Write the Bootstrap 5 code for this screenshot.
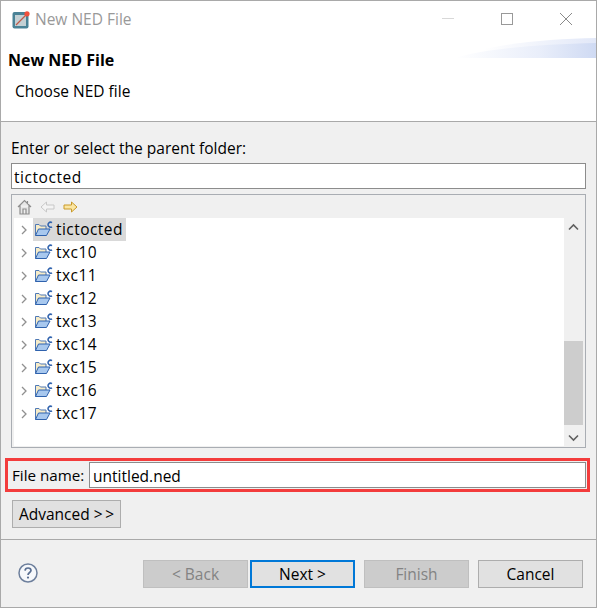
<!DOCTYPE html>
<html lang="en">
<head>
<meta charset="utf-8">
<title>New NED File</title>
<link href="https://cdn.jsdelivr.net/npm/bootstrap@5.3.0/dist/css/bootstrap.min.css" rel="stylesheet">
<style>
html,body{margin:0;height:608px;overflow:hidden;background:#f0f0f0}
body{font-family:"Open Sans","Noto Sans",sans-serif;font-size:15.5px;color:#000;line-height:20px}
.win-frame{width:597px;height:608px;border:1px solid #a9a9a9;background:#f0f0f0}
.title-strip{height:37px;background:#fff;padding-left:11px;color:#999;gap:5px;flex:none}
.title-word{position:relative;top:-1px}
.win-ctl{width:14px;height:14px;display:block}
.ctl-cell{width:59px;height:37px}
.ctl-nudge{margin-right:1px;margin-bottom:2px}
.head-zone{height:84px;background:#fff;border-bottom:1px solid #a9a9a9;position:relative;padding-left:7px;flex:none}
.head-art{position:absolute;right:0;top:0;width:141px;height:21px}
.head-title{font-weight:700;font-size:16px;height:20px;padding-top:12px;box-sizing:content-box}
.head-sub{padding-left:7px;margin-top:11px}
.page-zone{padding:0 10px;flex:none}
.lbl-folder{margin-top:16px;height:20px}
.flat-input{height:26px;border:1px solid #8c8c8c;border-radius:0;padding:1px 2px 0;font-size:15.5px;line-height:20px;color:#000;background:#fff;box-shadow:none}
.folder-input{margin-top:5px;letter-spacing:.55px}
.tree-box{margin-top:5px;height:254px;border:1px solid #a9adb3;padding:1px 2px;background:#f0f0f0}
.tree-tools{height:22px;gap:8px;padding-left:3px}
.tree-main{height:228px}
.tree-list{background:#fff}
.tree-row{height:23px;padding-left:5px}
.tree-arrow{width:10px;height:10px;margin-right:4px;flex:none}
.tree-item{height:23px;padding:0 3px 0 1px;gap:3px;white-space:nowrap}
.tree-word{position:relative;top:-1px;letter-spacing:.45px}
.tree-sel{background:#d9d9d9}
.v-bar{width:19px;background:#f0f0f0}
.v-btn{height:17px;flex:none}
.v-track{flex:1}
.v-gap{height:106px}
.v-thumb{height:84px;background:#cdcdcd}
.red-box{margin:10px -4px 0 -6px;height:34px;border:3px solid #f33c3c;padding:1px 1px 1px 4px;gap:5px}
.name-input{flex:1;min-width:0;padding-left:3px}
.file-lbl{width:72px;white-space:nowrap;font-size:15.2px}
.plain-btn{height:28px;border:1px solid #adadad;border-radius:0;background:#e1e1e1;color:#000;font-size:15.5px;line-height:20px;padding:0;width:105px;font-family:inherit}
.plain-btn:disabled{background:#cccccc;color:#838383;border-color:#bfbfbf;opacity:1}
.adv-btn{width:109px;margin-top:8px;margin-left:1px}
.line-sep{height:1px;background:#a9a9a9;margin-top:11px;flex:none}
.foot-row{padding:20px 13px 0 17px}
.help-ico{width:20px;height:20px;display:block;margin-top:3px}
.next-btn{border:2px solid #0078d7;margin-left:2px}
.finish-btn{margin-left:9px}
.cancel-btn{margin-left:9px}
</style>
</head>
<body>
<div class="win-frame d-flex flex-column">
  <div class="title-strip d-flex align-items-center">
    <svg width="18" height="18" viewBox="0 0 18 18">
      <rect x="0.5" y="1" width="16" height="16.5" rx="2" fill="#4a8296"/>
      <rect x="3" y="4" width="11" height="11" fill="#c3d0d4"/>
      <path d="M4 14 L14 4" stroke="#c05a4a" stroke-width="1.3"/>
      <circle cx="15" cy="2.8" r="2.6" fill="#f0503c"/>
    </svg>
    <span class="title-word">New NED File</span>
    <div class="ms-auto d-flex ctl-nudge">
      <div class="ctl-cell d-flex align-items-center justify-content-center"><svg class="win-ctl" viewBox="0 0 14 14"><path d="M1 6.5H13" stroke="#d8d8d8"/></svg></div>
      <div class="ctl-cell d-flex align-items-center justify-content-center"><svg class="win-ctl" viewBox="0 0 14 14"><rect x="1.5" y="1.5" width="11" height="11" fill="none" stroke="#999"/></svg></div>
      <div class="ctl-cell d-flex align-items-center justify-content-center"><svg class="win-ctl" viewBox="0 0 14 14"><path d="M1 1L13 13M13 1L1 13" stroke="#8a8a8a"/></svg></div>
    </div>
  </div>
  <div class="head-zone">
    <svg class="head-art" viewBox="0 0 141 21">
      <defs><linearGradient id="hg" x1="0" x2="1" y1="0" y2="0"><stop offset="0" stop-color="#fff"/><stop offset="0.6" stop-color="#e9eefa"/><stop offset="1" stop-color="#cfdaf3"/></linearGradient>
      <linearGradient id="hg2" x1="0" x2="1" y1="0" y2="0"><stop offset="0.2" stop-color="#fff"/><stop offset="1" stop-color="#e2e8f8"/></linearGradient></defs>
      <path d="M0 20 C25 8 85 1 141 0 V20Z" fill="url(#hg2)"/>
      <path d="M0 20 C30 11 85 6 141 5 V20Z" fill="url(#hg)"/>
    </svg>
    <div class="head-title">New NED File</div>
    <div class="head-sub">Choose NED file</div>
  </div>
  <div class="page-zone">
    <div class="lbl-folder">Enter or select the parent folder:</div>
    <input class="form-control flat-input folder-input" type="text" value="tictocted">
    <div class="tree-box">
      <div class="tree-tools d-flex align-items-center">
        <svg width="15" height="16" viewBox="0 0 15 16"><path d="M1 8L7.5 1.5L14 8M3 6.5V15H12V6.5M6 15V10H9V15M10.5 2V5" fill="#e6e6e6" stroke="#8d8d8d" stroke-width="1.2"/></svg>
        <svg width="15" height="12" viewBox="0 0 15 12"><path d="M6.5 1L1 6L6.5 11V8H14V4H6.5Z" fill="#f4f4f4" stroke="#c8c8c8"/></svg>
        <svg width="15" height="12" viewBox="0 0 15 12"><path d="M8.5 1L14 6L8.5 11V8H1V4H8.5Z" fill="#fbe6a2" stroke="#c99a2a"/></svg>
      </div>
      <div class="tree-main d-flex">
        <div class="tree-list flex-grow-1">
          <div class="tree-row d-flex align-items-center"><svg class="tree-arrow" viewBox="0 0 10 10"><path d="M3 1L7 5L3 9" fill="none" stroke="#909090" stroke-width="1.3"/></svg><div class="tree-item tree-sel d-flex align-items-center"><svg width="19" height="17" viewBox="0 0 19 17"><use href="#fold"/></svg><span class="tree-word">tictocted</span></div></div>
          <div class="tree-row d-flex align-items-center"><svg class="tree-arrow" viewBox="0 0 10 10"><path d="M3 1L7 5L3 9" fill="none" stroke="#909090" stroke-width="1.3"/></svg><div class="tree-item d-flex align-items-center"><svg width="19" height="17" viewBox="0 0 19 17"><use href="#fold"/></svg><span class="tree-word">txc10</span></div></div>
          <div class="tree-row d-flex align-items-center"><svg class="tree-arrow" viewBox="0 0 10 10"><path d="M3 1L7 5L3 9" fill="none" stroke="#909090" stroke-width="1.3"/></svg><div class="tree-item d-flex align-items-center"><svg width="19" height="17" viewBox="0 0 19 17"><use href="#fold"/></svg><span class="tree-word">txc11</span></div></div>
          <div class="tree-row d-flex align-items-center"><svg class="tree-arrow" viewBox="0 0 10 10"><path d="M3 1L7 5L3 9" fill="none" stroke="#909090" stroke-width="1.3"/></svg><div class="tree-item d-flex align-items-center"><svg width="19" height="17" viewBox="0 0 19 17"><use href="#fold"/></svg><span class="tree-word">txc12</span></div></div>
          <div class="tree-row d-flex align-items-center"><svg class="tree-arrow" viewBox="0 0 10 10"><path d="M3 1L7 5L3 9" fill="none" stroke="#909090" stroke-width="1.3"/></svg><div class="tree-item d-flex align-items-center"><svg width="19" height="17" viewBox="0 0 19 17"><use href="#fold"/></svg><span class="tree-word">txc13</span></div></div>
          <div class="tree-row d-flex align-items-center"><svg class="tree-arrow" viewBox="0 0 10 10"><path d="M3 1L7 5L3 9" fill="none" stroke="#909090" stroke-width="1.3"/></svg><div class="tree-item d-flex align-items-center"><svg width="19" height="17" viewBox="0 0 19 17"><use href="#fold"/></svg><span class="tree-word">txc14</span></div></div>
          <div class="tree-row d-flex align-items-center"><svg class="tree-arrow" viewBox="0 0 10 10"><path d="M3 1L7 5L3 9" fill="none" stroke="#909090" stroke-width="1.3"/></svg><div class="tree-item d-flex align-items-center"><svg width="19" height="17" viewBox="0 0 19 17"><use href="#fold"/></svg><span class="tree-word">txc15</span></div></div>
          <div class="tree-row d-flex align-items-center"><svg class="tree-arrow" viewBox="0 0 10 10"><path d="M3 1L7 5L3 9" fill="none" stroke="#909090" stroke-width="1.3"/></svg><div class="tree-item d-flex align-items-center"><svg width="19" height="17" viewBox="0 0 19 17"><use href="#fold"/></svg><span class="tree-word">txc16</span></div></div>
          <div class="tree-row d-flex align-items-center"><svg class="tree-arrow" viewBox="0 0 10 10"><path d="M3 1L7 5L3 9" fill="none" stroke="#909090" stroke-width="1.3"/></svg><div class="tree-item d-flex align-items-center"><svg width="19" height="17" viewBox="0 0 19 17"><use href="#fold"/></svg><span class="tree-word">txc17</span></div></div>
        </div>
        <div class="v-bar d-flex flex-column">
          <div class="v-btn d-flex align-items-center justify-content-center"><svg width="11" height="8" viewBox="0 0 11 8"><path d="M1 6.5L5.5 2L10 6.5" fill="none" stroke="#606060" stroke-width="1.6"/></svg></div>
          <div class="v-gap"></div>
          <div class="v-thumb"></div>
          <div class="v-track"></div>
          <div class="v-btn d-flex align-items-center justify-content-center"><svg width="11" height="8" viewBox="0 0 11 8"><path d="M1 1.5L5.5 6L10 1.5" fill="none" stroke="#606060" stroke-width="1.6"/></svg></div>
        </div>
      </div>
    </div>
    <div class="red-box d-flex align-items-center">
      <label class="file-lbl" for="fn">File name:</label>
      <input id="fn" class="form-control flat-input name-input" type="text" value="untitled.ned">
    </div>
    <button class="btn plain-btn adv-btn d-block" type="button">Advanced &gt;&#8201;&gt;</button>
  </div>
  <div class="line-sep"></div>
  <div class="foot-row d-flex align-items-start">
    <svg class="help-ico" viewBox="0 0 20 20"><circle cx="10" cy="10" r="9" fill="#f6f8fb" stroke="#6d7f9c" stroke-width="1.5"/><path d="M7 7.6C7.2 5.8 8.4 5 10 5C11.8 5 13 6 13 7.5C13 9.5 10 9.6 10 12" fill="none" stroke="#5a6f92" stroke-width="1.7"/><circle cx="10" cy="14.6" r="1.1" fill="#5a6f92"/></svg>
    <div class="ms-auto d-flex">
      <button class="btn plain-btn" type="button" disabled>&lt; Back</button>
      <button class="btn plain-btn next-btn" type="button">Next &gt;</button>
      <button class="btn plain-btn finish-btn" type="button" disabled>Finish</button>
      <button class="btn plain-btn cancel-btn" type="button">Cancel</button>
    </div>
  </div>
</div>
<svg width="0" height="0" class="d-block" aria-hidden="true"><defs>
  <g id="fold">
    <path d="M1.5 14.5V3.5H5L6.5 5H12V8" fill="#f7ecc8" stroke="#4f79b5"/>
    <path d="M1.5 14.5L4.5 8H16L12.5 14.5Z" fill="#a8c8ee" stroke="#2f62ad"/>
    <path d="M18 1.6A2.5 2.5 0 1 0 18 5.8" fill="none" stroke="#2f62ad" stroke-width="1.5"/>
  </g>
</defs></svg>
<script src="https://cdn.jsdelivr.net/npm/bootstrap@5.3.0/dist/js/bootstrap.bundle.min.js"></script>
</body>
</html>
